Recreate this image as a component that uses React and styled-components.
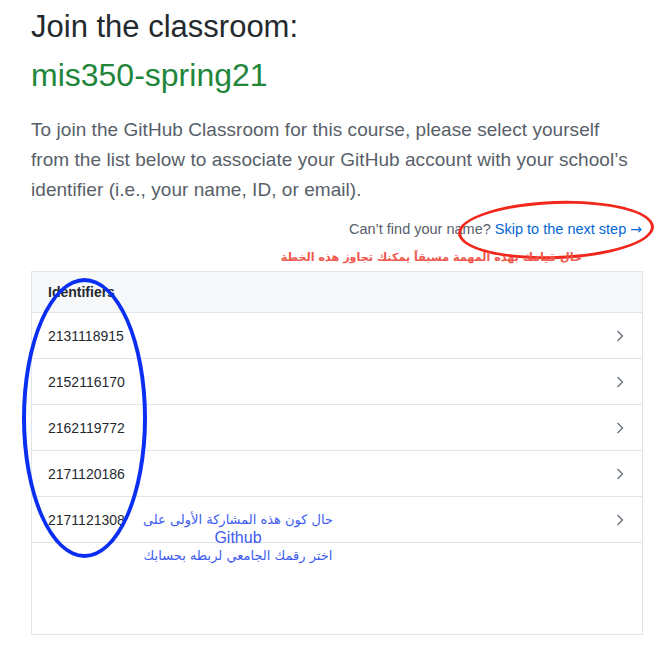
import styled, { createGlobalStyle } from "styled-components";

const GlobalStyle = createGlobalStyle`
  body {
    margin: 0;
    background: #ffffff;
    font-family: "Liberation Sans", Arial, sans-serif;
  }
`;

const ids = ["2131118915", "2152116170", "2162119772", "2171120186", "2171121308"];

export default function App() {
    return (
        <Page>
            <GlobalStyle />
            <Title>Join the classroom:</Title>
            <Classroom>mis350-spring21</Classroom>
            <Intro>
                To join the GitHub Classroom for this course, please select yourself<br />
                from the list below to associate your GitHub account with your school’s<br />
                identifier (i.e., your name, ID, or email).
            </Intro>
            <SkipLine>
                Can’t find your name? <SkipLink href="#">Skip to the next step <Arrow>→</Arrow></SkipLink>
                <RedRing />
                <RedNote>حال قيامك بهذه المهمة مسبقاً يمكنك تجاوز هذه الخطة</RedNote>
            </SkipLine>
            <Table>
                <HeadRow>Identifiers</HeadRow>
                {ids.map(id => (
                    <Row key={id}>
                        <span>{id}</span>
                        <Chevron viewBox="0 0 8 12">
                            <polyline points="1.5,1 6.5,6 1.5,11" />
                        </Chevron>
                    </Row>
                ))}
                <BlueRing />
                <BlueNote>
                    <span>حال كون هذه المشاركة الأولى على</span>
                    <span>Github</span>
                    <span>اختر رقمك الجامعي لربطه بحسابك</span>
                </BlueNote>
            </Table>
        </Page>
    );
}

const Page = styled.div`
    width: 612px;
    padding: 7px 31px 16px;
    color: #24292e;
`;

const Title = styled.h1`
    margin: 0;
    font-size: 31px;
    line-height: 40px;
    font-weight: 400;
    color: #24292e;
`;

const Classroom = styled.h2`
    margin: 8px 0 0;
    font-size: 32px;
    line-height: 40px;
    font-weight: 400;
    color: #22863a;
`;

const Intro = styled.p`
    margin: 20px 0 0;
    font-size: 19px;
    line-height: 30px;
    color: #586069;
    white-space: nowrap;
    letter-spacing: 0.05px;
`;

const SkipLine = styled.div`
    position: relative;
    margin-top: 14px;
    padding-right: 1px;
    text-align: right;
    font-size: 14.5px;
    line-height: 20px;
    color: #586069;
`;

const SkipLink = styled.a`
    color: #0366d6;
    text-decoration: none;
`;

const Arrow = styled.span`
    font-family: "DejaVu Sans", sans-serif;
    font-size: 14px;
`;

const RedRing = styled.div`
    position: absolute;
    left: 427px;
    top: -18px;
    width: 190px;
    height: 52px;
    border: 3.5px solid #f2261b;
    border-radius: 50%;
    transform: rotate(-2deg);
`;

const RedNote = styled.div`
    position: absolute;
    right: 61px;
    top: 29px;
    direction: rtl;
    font-family: "DejaVu Sans", sans-serif;
    font-size: 11.2px;
    font-weight: 700;
    color: #f0584e;
    white-space: nowrap;
`;

const Table = styled.div`
    position: relative;
    margin-top: 32px;
    min-height: 362px;
    border: 1px solid #e1e4e8;
`;

const HeadRow = styled.div`
    height: 40px;
    display: flex;
    align-items: center;
    padding-left: 16px;
    background: #f6f8fa;
    border-bottom: 1px solid #e1e4e8;
    font-size: 14px;
    font-weight: 700;
    color: #24292e;
`;

const Row = styled.div`
    height: 45px;
    display: flex;
    align-items: center;
    justify-content: space-between;
    padding: 0 18px 0 16px;
    border-bottom: 1px solid #e1e4e8;
    font-size: 14px;
    color: #24292e;
`;

const Chevron = styled.svg`
    width: 8px;
    height: 12px;
    fill: none;
    stroke: #6a737d;
    stroke-width: 1.4;
`;

const BlueRing = styled.div`
    position: absolute;
    left: -10px;
    top: 6px;
    width: 117px;
    height: 272px;
    border: 4.5px solid #0a2ff2;
    border-radius: 50%;
`;

const BlueNote = styled.div`
    position: absolute;
    left: 108px;
    top: 239px;
    width: 196px;
    display: flex;
    flex-direction: column;
    align-items: center;
    font-family: "DejaVu Sans", sans-serif;
    font-size: 13px;
    line-height: 18px;
    color: #3d5bf0;
    span:nth-child(2) {
        font-family: "Liberation Sans", Arial, sans-serif;
        font-size: 16px;
    }
`;
